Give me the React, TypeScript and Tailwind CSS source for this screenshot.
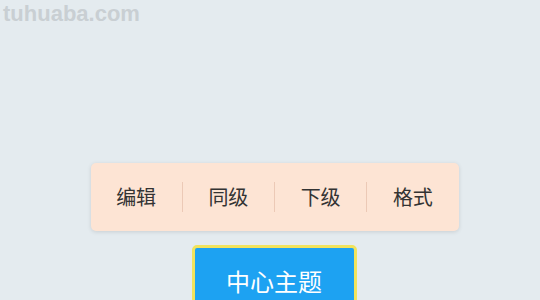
import React from 'react';

const items = ['编辑', '同级', '下级', '格式'];

export default function App() {
  return (
    <div
      className="relative w-[540px] h-[300px] overflow-hidden bg-[#e4ebef]"
      style={{ fontFamily: '"Noto Sans CJK SC", "Noto Sans", sans-serif' }}
    >
      <div
        className="absolute left-[3px] top-[-3px] text-[22px] font-bold text-[#c9cfd3]"
        style={{ fontFamily: '"Liberation Sans", sans-serif' }}
      >
        tuhuaba.com
      </div>

      <div className="flex flex-col items-center pt-[163px]">
        <div className="flex items-center w-[368px] h-[68px] ml-[9px] rounded-[5px] bg-[#fde4d4] shadow-[0_1px_4px_rgba(0,0,0,0.12)]">
          {items.map((t, i) => (
            <React.Fragment key={t}>
              {i > 0 && <div className="w-px h-[30px] bg-[#ecc9b6]" />}
              <div className="flex-1 text-center text-[20px] text-[#333333] leading-none">{t}</div>
            </React.Fragment>
          ))}
        </div>

        <div className="mt-[14px] ml-[8px] w-[165px] h-[70px] rounded-[5px] border-[3px] border-[#f1e35c] bg-[#1da2f2] flex justify-center pt-[21px]">
          <span className="text-[24px] text-white leading-none">中心主题</span>
        </div>
      </div>
    </div>
  );
}
